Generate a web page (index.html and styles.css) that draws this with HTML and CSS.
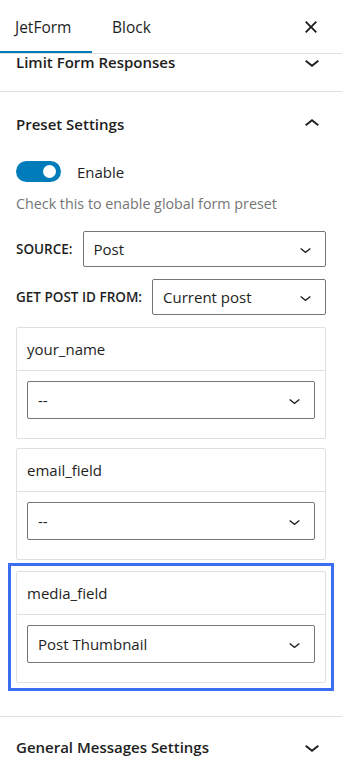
FILE: index.html
```html
<!DOCTYPE html>
<html lang="en">
<head>
    <meta charset="UTF-8">
    <title>JetForm Sidebar</title>
    <meta name="viewport" content="width=device-width, initial-scale=1">
    <link rel="stylesheet" href="styles.css">
</head>
<body>
    <div class="sidebar">
        <div class="tabs">
            <button class="tab active">JetForm</button>
            <button class="tab">Block</button>
            <button class="close" aria-label="Close">
                <svg width="30" height="30" viewBox="0 0 24 24"><path d="M12 13.06l3.712 3.713 1.061-1.06L13.061 12l3.712-3.712-1.06-1.06L12 10.938 8.288 7.227l-1.061 1.06L10.939 12l-3.712 3.712 1.06 1.061L12 13.061z"/></svg>
            </button>
        </div>

        <div class="panel panel-cut">
            <div class="panel-title">
                <span>Limit Form Responses</span>
                <svg width="30" height="30" viewBox="0 0 24 24"><path d="M17.5 11.6L12 16l-5.5-4.4.9-1.2L12 14l4.6-3.6 1 1.2z"/></svg>
            </div>
        </div>

        <div class="panel open">
            <div class="panel-title">
                <span>Preset Settings</span>
                <svg width="30" height="30" viewBox="0 0 24 24"><path d="M6.5 12.4L12 8l5.5 4.4-.9 1.2L12 10l-4.6 3.6-1-1.2z"/></svg>
            </div>

            <div class="toggle-row">
                <span class="toggle"><span class="knob"></span></span>
                <span class="toggle-label">Enable</span>
            </div>
            <p class="help">Check this to enable global form preset</p>

            <div class="field-row">
                <label class="field-label">Source:</label>
                <div class="select">
                    <span>Post</span>
                    <svg width="23" height="23" viewBox="0 0 24 24"><path d="M17.5 11.6L12 16l-5.5-4.4.9-1.2L12 14l4.6-3.6 1 1.2z"/></svg>
                </div>
            </div>
            <div class="field-row">
                <label class="field-label">Get post ID from:</label>
                <div class="select">
                    <span>Current post</span>
                    <svg width="23" height="23" viewBox="0 0 24 24"><path d="M17.5 11.6L12 16l-5.5-4.4.9-1.2L12 14l4.6-3.6 1 1.2z"/></svg>
                </div>
            </div>

            <div class="map-card">
                <div class="map-head">your_name</div>
                <div class="map-body">
                    <div class="select">
                        <span>--</span>
                        <svg width="23" height="23" viewBox="0 0 24 24"><path d="M17.5 11.6L12 16l-5.5-4.4.9-1.2L12 14l4.6-3.6 1 1.2z"/></svg>
                    </div>
                </div>
            </div>

            <div class="map-card">
                <div class="map-head">email_field</div>
                <div class="map-body">
                    <div class="select">
                        <span>--</span>
                        <svg width="23" height="23" viewBox="0 0 24 24"><path d="M17.5 11.6L12 16l-5.5-4.4.9-1.2L12 14l4.6-3.6 1 1.2z"/></svg>
                    </div>
                </div>
            </div>

            <div class="highlight">
                <div class="map-card">
                    <div class="map-head">media_field</div>
                    <div class="map-body">
                        <div class="select">
                            <span>Post Thumbnail</span>
                            <svg width="23" height="23" viewBox="0 0 24 24"><path d="M17.5 11.6L12 16l-5.5-4.4.9-1.2L12 14l4.6-3.6 1 1.2z"/></svg>
                        </div>
                    </div>
                </div>
            </div>
        </div>

        <div class="panel">
            <div class="panel-title">
                <span>General Messages Settings</span>
                <svg width="30" height="30" viewBox="0 0 24 24"><path d="M17.5 11.6L12 16l-5.5-4.4.9-1.2L12 14l4.6-3.6 1 1.2z"/></svg>
            </div>
        </div>
    </div>
</body>
</html>
```

FILE: styles.css
```css
body {
    margin: 0;
    padding: 0;
    background: #fff;
    color: #1e1e1e;
    font-family: "Open Sans", "Noto Sans", Arial, sans-serif;
}
.sidebar {
    width: 342px;
}
svg {
    fill: #1e1e1e;
    display: block;
}
button {
    font-family: inherit;
    background: none;
    border: none;
    padding: 0;
    color: #1e1e1e;
    cursor: pointer;
}
.tabs {
    display: flex;
    align-items: stretch;
    height: 53px;
    border-bottom: 1px solid #e0e0e0;
}
.tab {
    font-size: 15.5px;
    text-align: left;
    padding: 0 0 0 15px;
}
.tab.active {
    width: 92px;
    box-shadow: inset 0 -2px 0 #007cba;
}
.tab + .tab {
    padding-left: 20px;
}
.close {
    margin-left: auto;
    margin-right: 16px;
    display: flex;
    align-items: center;
}
.panel {
    border-bottom: 1px solid #e0e0e0;
    padding: 0 16px;
}
.panel-title {
    display: flex;
    align-items: center;
    justify-content: space-between;
    font-size: 15px;
    font-weight: 600;
    height: 60px;
}
.panel-title svg {
    margin-right: -1px;
}
.panel-cut .panel-title {
    height: 16px;
    padding-bottom: 21px;
}
.panel.open {
    padding-bottom: 25px;
}
.panel.open .panel-title {
    height: 64px;
}
.toggle-row {
    display: flex;
    align-items: center;
    gap: 16px;
    margin-top: 5px;
}
.toggle {
    display: flex;
    align-items: center;
    width: 45px;
    height: 21px;
    border-radius: 11px;
    background: #007cba;
    box-sizing: border-box;
    padding-left: 27px;
}
.knob {
    width: 13px;
    height: 13px;
    border-radius: 50%;
    background: #fff;
}
.toggle-label {
    font-size: 15px;
}
.help {
    margin: 12px 0 18px;
    font-size: 14.3px;
    color: #757575;
}
.field-row {
    display: flex;
    align-items: center;
    gap: 10px;
    margin-bottom: 12px;
}
.field-label {
    font-size: 13.5px;
    font-weight: 600;
    text-transform: uppercase;
    white-space: nowrap;
}
.select {
    flex: 1;
    display: flex;
    align-items: center;
    justify-content: space-between;
    height: 36px;
    box-sizing: border-box;
    border: 1px solid #757575;
    border-radius: 2px;
    padding: 0 8px 0 10px;
    font-size: 15px;
}
.map-card {
    border: 1px solid #e0e0e0;
    border-radius: 2px;
    margin-top: 9px;
}
.map-head {
    font-size: 15px;
    height: 42px;
    line-height: 42px;
    padding: 0 10px;
    border-bottom: 1px solid #e0e0e0;
}
.map-body {
    padding: 10px 10px 19px;
}
.map-body .select {
    height: 38px;
}
.highlight {
    border: 3px solid #3c6cf0;
    margin: 3px -8px 0;
    padding: 0 5px 5px;
}
.highlight .map-card {
    margin-top: 5px;
}
```
